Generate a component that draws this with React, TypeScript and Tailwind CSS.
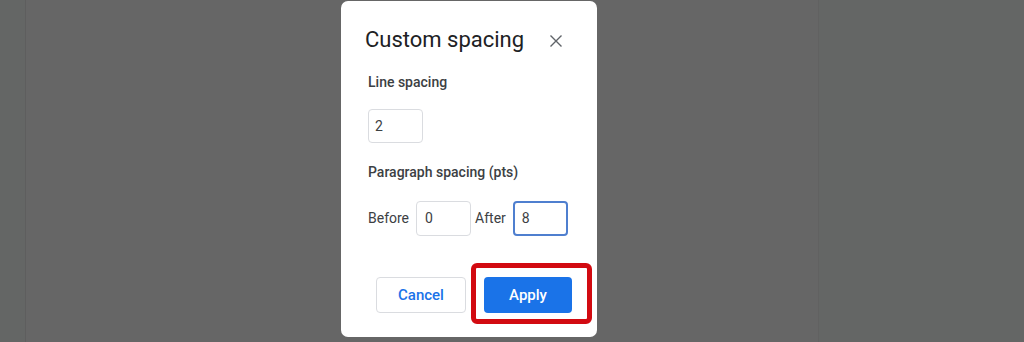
import React from "react";

export default function App() {
  return (
    <div className="relative w-[1024px] h-[342px] overflow-hidden bg-[#666666] flex" style={{ fontFamily: "Roboto, 'Liberation Sans', sans-serif" }}>
      <div className="w-[25px] h-full bg-[#646665]" />
      <div className="flex-1 h-full border-l border-[#5e5e5e] bg-[#666666]" />
      <div className="w-[206px] h-full border-l border-[#616161] bg-[#646665]" />

      <div className="absolute left-[341px] top-[1px] w-[256px] h-[336px] bg-white rounded-[7px] flex flex-col">
        <div className="flex items-center justify-between pl-[24px] pr-[35px] pt-[25px]">
          <div className="text-[22px] leading-[28px] text-[#202124] tracking-[0px]">Custom spacing</div>
          <svg width="12" height="12" viewBox="0 0 12 12" className="mt-[1px]">
            <path d="M0.5 0.5 L11.5 11.5 M11.5 0.5 L0.5 11.5" stroke="#5f6368" strokeWidth="1.4" />
          </svg>
        </div>
        <div className="pl-[27px] mt-[18px] text-[14px] leading-[20px] font-medium text-[#3c4043]">Line spacing</div>
        <div className="ml-[27px] mt-[17px] w-[55px] h-[34px] border border-[#dadce0] rounded-[4px] flex items-center pl-[6px] text-[14px] text-[#3c4043]">2</div>
        <div className="pl-[27px] mt-[19px] text-[14px] leading-[20px] font-medium text-[#3c4043]">Paragraph spacing (pts)</div>
        <div className="pl-[27px] mt-[19px] flex items-center text-[14px] text-[#3c4043]">
          <span>Before</span>
          <div className="ml-[7px] w-[55px] h-[35px] border border-[#dadce0] rounded-[4px] flex items-center pl-[8px]">0</div>
          <span className="ml-[4px]">After</span>
          <div className="ml-[7px] w-[55px] h-[35px] border-2 border-[#4f7fcf] rounded-[4px] flex items-center pl-[7px]">8</div>
        </div>
        <div className="mt-[41px] flex justify-end gap-[18px] pr-[25px]">
          <div className="w-[90px] h-[36px] border border-[#dadce0] rounded-[4px] flex items-center justify-center text-[15px] font-medium text-[#1a73e8]">Cancel</div>
          <div className="w-[88px] h-[36px] bg-[#1a73e8] rounded-[4px] flex items-center justify-center text-[15px] font-medium text-white">Apply</div>
        </div>
        <div className="absolute left-[130px] top-[262px] w-[121px] h-[61px] border-[5px] border-[#d20a11] rounded-[6px]" />
      </div>
    </div>
  );
}
